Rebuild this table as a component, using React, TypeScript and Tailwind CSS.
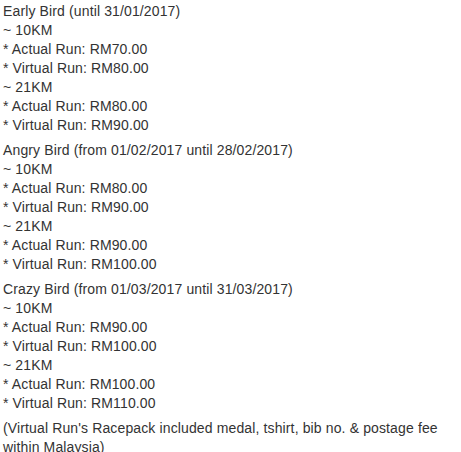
import React from "react";

const sections = [
  {
    title: "Early Bird (until 31/01/2017)",
    lines: ["~ 10KM", "* Actual Run: RM70.00", "* Virtual Run: RM80.00", "~ 21KM", "* Actual Run: RM80.00", "* Virtual Run: RM90.00"],
  },
  {
    title: "Angry Bird (from 01/02/2017 until 28/02/2017)",
    lines: ["~ 10KM", "* Actual Run: RM80.00", "* Virtual Run: RM90.00", "~ 21KM", "* Actual Run: RM90.00", "* Virtual Run: RM100.00"],
  },
  {
    title: "Crazy Bird (from 01/03/2017 until 31/03/2017)",
    lines: ["~ 10KM", "* Actual Run: RM90.00", "* Virtual Run: RM100.00", "~ 21KM", "* Actual Run: RM100.00", "* Virtual Run: RM110.00"],
  },
];

export default function App() {
  return (
    <div
      className="w-[461px] h-[452px] overflow-hidden bg-white pl-[3px] pr-[8px] pt-[2px] text-[14px] leading-[19px] tracking-[0.13px] text-[#333333]"
      style={{ fontFamily: '"Liberation Sans", Arial, sans-serif' }}
    >
      {sections.map((s) => (
        <p key={s.title} className="mb-[6px]">
          {s.title}
          {s.lines.map((l, i) => (
            <React.Fragment key={i}>
              <br />
              {l}
            </React.Fragment>
          ))}
        </p>
      ))}
      <p>(Virtual Run's Racepack included medal, tshirt, bib no. &amp; postage fee within Malaysia)</p>
    </div>
  );
}
